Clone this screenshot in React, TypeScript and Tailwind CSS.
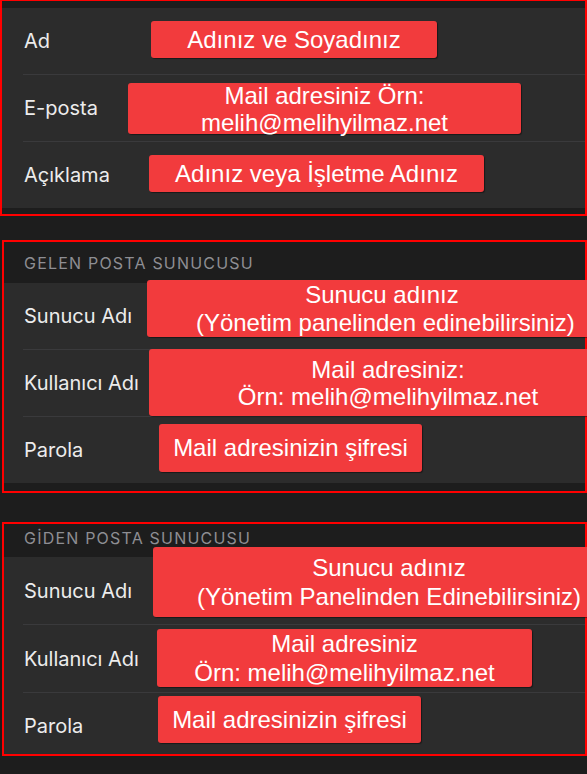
import type { ReactNode } from "react"

const boxBase =
    "relative z-10 flex shrink-0 flex-col items-center justify-center rounded-[3px] bg-[#f23b3d] text-center font-['Liberation_Sans',Arial,sans-serif] text-[24px] text-white shadow-[1px_1px_1px_rgba(0,0,0,0.45)]"

function Row({ label, labelClass, children }: { label: string; labelClass: string; children: ReactNode }) {
    return (
        <div className="flex items-start">
            <div className={`flex shrink-0 items-center self-stretch ${labelClass}`}>{label}</div>
            {children}
        </div>
    )
}

const Sep = () => <div className="-ml-px h-px bg-[#3a3a3c]" />

export default function App() {
    return (
        <div className="h-[774px] w-[587px] overflow-hidden bg-[#1d1d1d] font-['Inter',sans-serif] text-[20px] text-[#ececec]">

            {/* Kişisel bilgiler */}
            <div className="w-[587px] border-x-2 border-t border-b-2 border-[#ff0000] pt-[7px] pb-[6px]">
                <div className="bg-[#2c2c2c] pl-[22px]">
                    <div className="h-[66px]">
                        <Row label="Ad" labelClass="h-[66px] w-[127px]">
                            <div className={`${boxBase} mt-[13px] h-[37px] w-[286px]`}>Adınız ve Soyadınız</div>
                        </Row>
                    </div>
                    <Sep />
                    <div className="h-[66px]">
                        <Row label="E-posta" labelClass="h-[66px] w-[104px]">
                            <div className={`${boxBase} mt-[8px] h-[51px] w-[393px] leading-[27px]`}>
                                <span>Mail adresiniz Örn:</span>
                                <span>melih@melihyilmaz.net</span>
                            </div>
                        </Row>
                    </div>
                    <Sep />
                    <div className="h-[66px]">
                        <Row label="Açıklama" labelClass="h-[66px] w-[125px]">
                            <div className={`${boxBase} mt-[13px] h-[37px] w-[335px]`}>Adınız veya İşletme Adınız</div>
                        </Row>
                    </div>
                </div>
            </div>

            {/* Gelen posta sunucusu */}
            <div className="mt-[24px] ml-[2px] w-[585px] border-2 border-[#ff0000] pb-[8px]">
                <div className="flex h-[41px] items-center pl-[20px] text-[16px] tracking-[1.2px] text-[#8e8e93]">GELEN POSTA SUNUCUSU</div>
                <div className="bg-[#2c2c2c] pl-[20px]">
                    <div className="h-[66px]">
                        <Row label="Sunucu Adı" labelClass="h-[66px] w-[123px]">
                            <div className={`${boxBase} -mt-[3px] h-[57px] w-[470px] leading-[28px]`}>
                                <span>Sunucu adınız</span>
                                <span className="whitespace-pre"> (Yönetim panelinden edinebilirsiniz)</span>
                            </div>
                        </Row>
                    </div>
                    <Sep />
                    <div className="h-[66px]">
                        <Row label="Kullanıcı Adı" labelClass="h-[66px] w-[125px]">
                            <div className={`${boxBase} -mt-[1px] h-[67px] w-[478px] leading-[27px]`}>
                                <span>Mail adresiniz:</span>
                                <span>Örn: melih@melihyilmaz.net</span>
                            </div>
                        </Row>
                    </div>
                    <Sep />
                    <div className="h-[66px]">
                        <Row label="Parola" labelClass="h-[66px] w-[135px]">
                            <div className={`${boxBase} mt-[7px] h-[48px] w-[263px]`}>Mail adresinizin şifresi</div>
                        </Row>
                    </div>
                </div>
            </div>

            {/* Giden posta sunucusu */}
            <div className="mt-[29px] ml-[2px] w-[585px] border-2 border-[#ff0000]">
                <div className="flex h-[33px] items-center pb-[6px] pl-[20px] text-[16px] tracking-[1.2px] text-[#8e8e93]">GİDEN POSTA SUNUCUSU</div>
                <div className="bg-[#2c2c2c] pl-[20px]">
                    <div className="h-[67px]">
                        <Row label="Sunucu Adı" labelClass="h-[67px] w-[129px]">
                            <div className={`${boxBase} -mt-[10px] h-[70px] w-[472px] leading-[29px]`}>
                                <span>Sunucu adınız</span>
                                <span>(Yönetim Panelinden Edinebilirsiniz)</span>
                            </div>
                        </Row>
                    </div>
                    <Sep />
                    <div className="h-[67px]">
                        <Row label="Kullanıcı Adı" labelClass="h-[67px] w-[133px]">
                            <div className={`${boxBase} mt-[4px] h-[58px] w-[375px] leading-[29px]`}>
                                <span>Mail adresiniz</span>
                                <span>Örn: melih@melihyilmaz.net</span>
                            </div>
                        </Row>
                    </div>
                    <Sep />
                    <div className="h-[61px]">
                        <Row label="Parola" labelClass="h-[61px] w-[134px] pt-[5px]">
                            <div className={`${boxBase} mt-[3px] h-[47px] w-[263px]`}>Mail adresinizin şifresi</div>
                        </Row>
                    </div>
                </div>
            </div>

        </div>
    )
}
